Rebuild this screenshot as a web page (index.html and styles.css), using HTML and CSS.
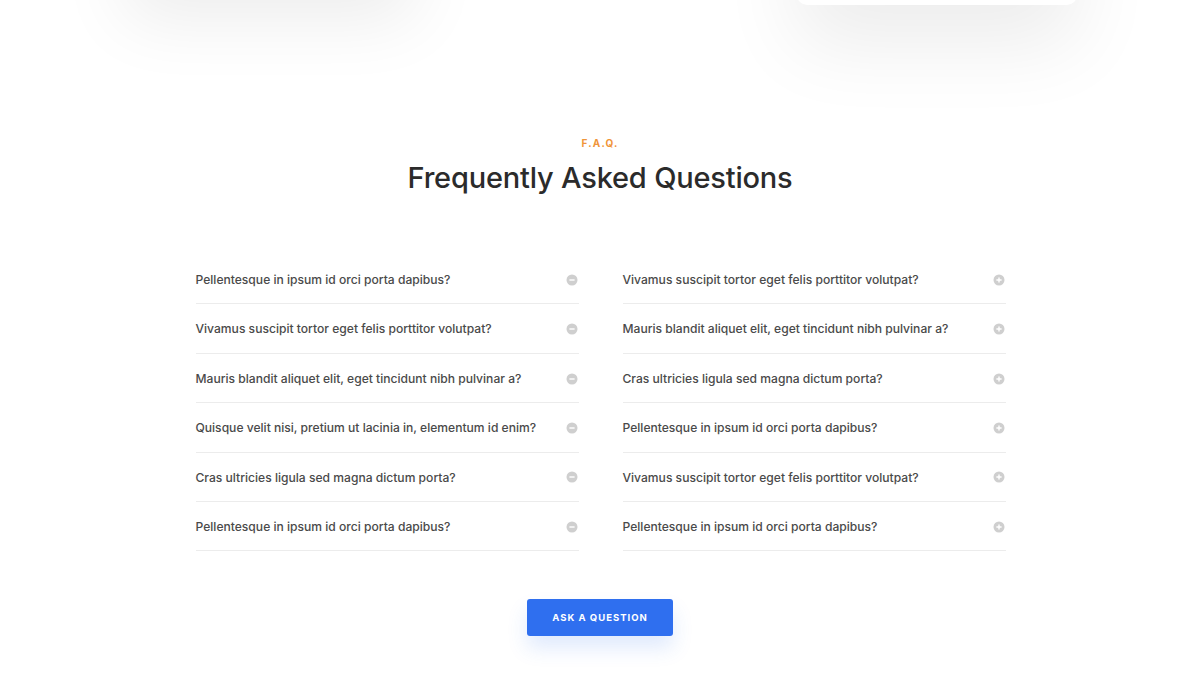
FILE: index.html
```html
<!DOCTYPE html>
<html lang="en">
<head>
<meta charset="utf-8">
<title>FAQ</title>
<link rel="stylesheet" href="styles.css">
</head>
<body>
<div class="prev">
  <div class="card card-left"></div>
  <div class="card card-right"></div>
</div>
<section class="faq">
  <div class="eyebrow">F.A.Q.</div>
  <h2 class="title">Frequently Asked Questions</h2>
  <div class="cols">
    <ul class="list">
      <li class="item"><span>Pellentesque in ipsum id orci porta dapibus?</span><svg class="ico" viewBox="0 0 12 12"><circle cx="6" cy="6" r="5.5"/><path d="M3.4 6h5.2"/></svg></li>
      <li class="item"><span>Vivamus suscipit tortor eget felis porttitor volutpat?</span><svg class="ico" viewBox="0 0 12 12"><circle cx="6" cy="6" r="5.5"/><path d="M3.4 6h5.2"/></svg></li>
      <li class="item"><span>Mauris blandit aliquet elit, eget tincidunt nibh pulvinar a?</span><svg class="ico" viewBox="0 0 12 12"><circle cx="6" cy="6" r="5.5"/><path d="M3.4 6h5.2"/></svg></li>
      <li class="item"><span>Quisque velit nisi, pretium ut lacinia in, elementum id enim?</span><svg class="ico" viewBox="0 0 12 12"><circle cx="6" cy="6" r="5.5"/><path d="M3.4 6h5.2"/></svg></li>
      <li class="item"><span>Cras ultricies ligula sed magna dictum porta?</span><svg class="ico" viewBox="0 0 12 12"><circle cx="6" cy="6" r="5.5"/><path d="M3.4 6h5.2"/></svg></li>
      <li class="item"><span>Pellentesque in ipsum id orci porta dapibus?</span><svg class="ico" viewBox="0 0 12 12"><circle cx="6" cy="6" r="5.5"/><path d="M3.4 6h5.2"/></svg></li>
    </ul>
    <ul class="list">
      <li class="item"><span>Vivamus suscipit tortor eget felis porttitor volutpat?</span><svg class="ico" viewBox="0 0 12 12"><circle cx="6" cy="6" r="5.5"/><path d="M3.4 6h5.2M6 3.4v5.2"/></svg></li>
      <li class="item"><span>Mauris blandit aliquet elit, eget tincidunt nibh pulvinar a?</span><svg class="ico" viewBox="0 0 12 12"><circle cx="6" cy="6" r="5.5"/><path d="M3.4 6h5.2M6 3.4v5.2"/></svg></li>
      <li class="item"><span>Cras ultricies ligula sed magna dictum porta?</span><svg class="ico" viewBox="0 0 12 12"><circle cx="6" cy="6" r="5.5"/><path d="M3.4 6h5.2M6 3.4v5.2"/></svg></li>
      <li class="item"><span>Pellentesque in ipsum id orci porta dapibus?</span><svg class="ico" viewBox="0 0 12 12"><circle cx="6" cy="6" r="5.5"/><path d="M3.4 6h5.2M6 3.4v5.2"/></svg></li>
      <li class="item"><span>Vivamus suscipit tortor eget felis porttitor volutpat?</span><svg class="ico" viewBox="0 0 12 12"><circle cx="6" cy="6" r="5.5"/><path d="M3.4 6h5.2M6 3.4v5.2"/></svg></li>
      <li class="item"><span>Pellentesque in ipsum id orci porta dapibus?</span><svg class="ico" viewBox="0 0 12 12"><circle cx="6" cy="6" r="5.5"/><path d="M3.4 6h5.2M6 3.4v5.2"/></svg></li>
    </ul>
  </div>
  <button class="btn">ASK A QUESTION</button>
</section>
</body>
</html>
```

FILE: styles.css
```css
* { box-sizing: border-box; }
html, body { margin: 0; padding: 0; background: #fff; }
body {
  font-family: "Inter", "Noto Sans", sans-serif;
  color: #333;
  overflow: hidden;
  height: 675px;
}
.prev {
  height: 5px;
  display: flex;
  align-items: flex-end;
}
.card {
  height: 300px;
  background: #fff;
  border-radius: 10px;
  flex: none;
}
.card-left {
  width: 290px;
  margin-left: 125px;
  margin-bottom: 25px;
  box-shadow: 0 40px 70px rgba(0, 0, 0, 0.075);
}
.card-right {
  width: 280px;
  margin-left: 382px;
  box-shadow: 0 40px 80px rgba(0, 0, 0, 0.075);
}
.faq {
  display: flex;
  flex-direction: column;
  align-items: center;
  padding-top: 132px;
}
.eyebrow {
  font-size: 10px;
  font-weight: 700;
  letter-spacing: 1.2px;
  color: #f0953a;
  line-height: 12px;
}
.title {
  margin: 12px 0 0;
  font-size: 29px;
  font-weight: 500;
  color: #2b2b2b;
  line-height: 34px;
  letter-spacing: -0.2px;
}
.cols {
  margin-top: 60px;
  display: flex;
  gap: 44px;
  padding-left: 1px;
}
.list {
  list-style: none;
  margin: 0;
  padding: 0;
  width: 383px;
}
.item {
  display: flex;
  align-items: center;
  justify-content: space-between;
  padding: 17px 0 16px;
  line-height: 15.4px;
  font-size: 12.1px;
  font-weight: 500;
  color: #4a4a4a;
  border-bottom: 1px solid #ececec;
}
.ico {
  width: 12px;
  height: 12px;
  flex: none;
  margin-right: 1px;
}
.ico circle { fill: #cfcfcf; }
.ico path { stroke: #fff; stroke-width: 1.4; fill: none; }
.btn {
  margin-top: 48px;
  width: 146px;
  height: 37px;
  border: none;
  border-radius: 3px;
  background: #2f6fef;
  color: #fff;
  font-family: "Inter", "Noto Sans", sans-serif;
  font-size: 9.5px;
  font-weight: 700;
  letter-spacing: 1px;
  box-shadow: 0 12px 20px rgba(47, 111, 239, 0.15);
}
```
